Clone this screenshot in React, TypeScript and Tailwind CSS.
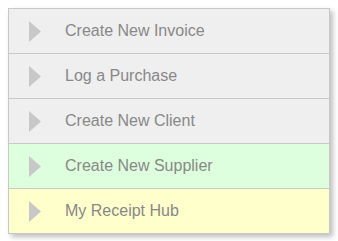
const items = [
  { label: 'Create New Invoice', bg: 'bg-[#efefef]' },
  { label: 'Log a Purchase', bg: 'bg-[#efefef]' },
  { label: 'Create New Client', bg: 'bg-[#efefef]' },
  { label: 'Create New Supplier', bg: 'bg-[#ddffdd]' },
  { label: 'My Receipt Hub', bg: 'bg-[#ffffcc]' },
];

export default function App() {
  return (
    <div className="w-[338px] h-[241px] bg-white p-2 font-['Liberation_Sans',Arial,sans-serif]">
      <div className="w-[322px] border border-[#c8c8c8] shadow-[3px_3px_5px_rgba(0,0,0,0.25)]">
        {items.map((item, i) => (
          <div
            key={item.label}
            className={`flex items-center ${item.bg} ${i > 0 ? 'h-[45px] border-t border-[#c8c8c8]' : 'h-[44px]'}`}
          >
            <svg width="12" height="21" viewBox="0 0 12 21" className="ml-[20px] shrink-0">
              <polygon points="0,0 12,10.5 0,21" fill="#c8c8c8" />
            </svg>
            <span className="ml-[24px] text-[16px] text-[#888888]">{item.label}</span>
          </div>
        ))}
      </div>
    </div>
  );
}
